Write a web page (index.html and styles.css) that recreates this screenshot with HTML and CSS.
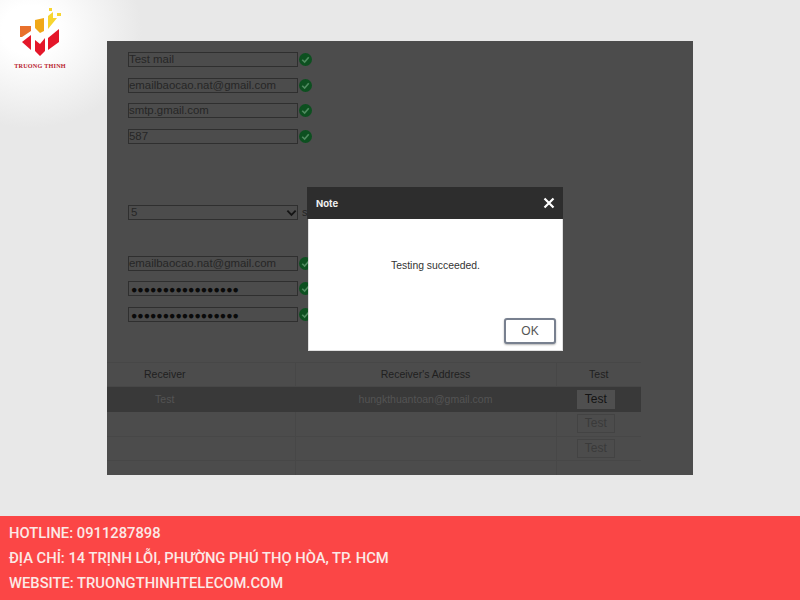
FILE: index.html
```html
<!DOCTYPE html>
<html lang="en">
<head>
  <meta charset="UTF-8">
  <meta name="viewport" content="width=device-width, initial-scale=1.0">
  <title>Testing succeeded</title>
  <link rel="stylesheet" href="styles.css">
</head>
<body>
  <div class="stage">
    <div class="logo">
      <svg width="42" height="50" viewBox="0 0 42 50">
        <polygon points="1,18 12,18 12,23 3,29 1,29" fill="#e8702c"/>
        <polygon points="16,12 25,10 25,23 21,25 16,20" fill="#f0a818"/>
        <polygon points="29,8 34,4 34,10 38,10 29,21" fill="#f7d530"/>
        <rect x="30" y="0" width="3" height="3" fill="#f7d530"/>
        <rect x="38" y="5" width="4" height="3" fill="#f7d530"/>
        <polygon points="3,34 12,27 12,42" fill="#e4172a"/>
        <polygon points="16,32 21,36 26,30 26,43 21,48 16,43" fill="#e4172a"/>
        <polygon points="29,30 40,21 40,34 29,42" fill="#e4172a"/>
      </svg>
      <span class="logo-name">TRUONG THINH</span>
    </div>

    <div class="panel">
      <div class="fields">
        <div class="field"><div class="input">Test mail</div><span class="check"><svg viewBox="0 0 12 12"><path d="M3 6.2 5.2 8.4 9 4"/></svg></span></div>
        <div class="field"><div class="input">emailbaocao.nat@gmail.com</div><span class="check"><svg viewBox="0 0 12 12"><path d="M3 6.2 5.2 8.4 9 4"/></svg></span></div>
        <div class="field"><div class="input">smtp.gmail.com</div><span class="check"><svg viewBox="0 0 12 12"><path d="M3 6.2 5.2 8.4 9 4"/></svg></span></div>
        <div class="field"><div class="input">587</div><span class="check"><svg viewBox="0 0 12 12"><path d="M3 6.2 5.2 8.4 9 4"/></svg></span></div>
      </div>

      <div class="field select-row">
        <div class="input select">5
          <svg class="chevron" viewBox="0 0 12 8"><path d="M1.5 1.5 6 6 10.5 1.5"/></svg>
        </div>
        <span class="unit">s</span>
      </div>

      <div class="fields">
        <div class="field"><div class="input">emailbaocao.nat@gmail.com</div><span class="check"><svg viewBox="0 0 12 12"><path d="M3 6.2 5.2 8.4 9 4"/></svg></span></div>
        <div class="field"><div class="input dots">●●●●●●●●●●●●●●●●●</div><span class="check"><svg viewBox="0 0 12 12"><path d="M3 6.2 5.2 8.4 9 4"/></svg></span></div>
        <div class="field"><div class="input dots">●●●●●●●●●●●●●●●●●</div><span class="check"><svg viewBox="0 0 12 12"><path d="M3 6.2 5.2 8.4 9 4"/></svg></span></div>
      </div>

      <table class="receivers">
        <colgroup>
          <col class="col-name">
          <col class="col-addr">
          <col class="col-test">
        </colgroup>
        <thead>
          <tr><th class="cell-name">Receiver</th><th>Receiver's Address</th><th>Test</th></tr>
        </thead>
        <tbody>
          <tr class="selected"><td class="cell-name">Test</td><td>hungkthuantoan@gmail.com</td><td class="cell-btn"><span class="test-btn active">Test</span></td></tr>
          <tr><td></td><td></td><td class="cell-btn"><span class="test-btn">Test</span></td></tr>
          <tr><td></td><td></td><td class="cell-btn"><span class="test-btn">Test</span></td></tr>
          <tr class="cut"><td></td><td></td><td></td></tr>
        </tbody>
      </table>

      <div class="dialog">
        <div class="dialog-head">
          <span class="dialog-title">Note</span>
          <svg class="dialog-close" viewBox="0 0 12 12"><path d="M1.5 1.5 10.5 10.5M10.5 1.5 1.5 10.5"/></svg>
        </div>
        <div class="dialog-body">
          <p class="dialog-msg">Testing succeeded.</p>
          <button class="ok-btn" type="button">OK</button>
        </div>
      </div>
    </div>
  </div>

  <footer class="contact">
    <div>HOTLINE: 0911287898</div>
    <div>ĐỊA CHỈ: 14 TRỊNH LỖI, PHƯỜNG PHÚ THỌ HÒA, TP. HCM</div>
    <div>WEBSITE: TRUONGTHINHTELECOM.COM</div>
  </footer>
</body>
</html>
```

FILE: styles.css
```css
html, body {
  margin: 0;
  padding: 0;
  height: 600px;
  overflow: hidden;
}
body {
  font-family: 'Liberation Sans', Arial, sans-serif;
  display: flex;
  flex-direction: column;
}
.stage {
  position: relative;
  height: 516px;
  box-sizing: border-box;
  padding: 41px 107px;
  background: radial-gradient(ellipse 112px 98px at 30px 30px, #ffffff 25%, #e8e8e8 100%);
}
.logo {
  position: absolute;
  left: 14px;
  top: 8px;
  width: 52px;
  display: flex;
  flex-direction: column;
  align-items: center;
}
.logo svg {
  display: block;
}
.logo-name {
  font-family: 'Liberation Serif', serif;
  font-weight: bold;
  font-size: 6.2px;
  letter-spacing: 0.2px;
  color: #b8202c;
  white-space: nowrap;
  margin-top: 4px;
}

.panel {
  position: relative;
  height: 434px;
  background-color: #4c4c4c;
  overflow: hidden;
}
.fields {
  display: flex;
  flex-direction: column;
  gap: 10.5px;
  padding-left: 21px;
}
.fields:first-child {
  padding-top: 11px;
}
.field {
  display: flex;
  align-items: center;
  gap: 1px;
}
.input {
  width: 170px;
  height: 15px;
  box-sizing: border-box;
  border: 1px solid #2f2f2f;
  padding-left: 0;
  font-size: 11.4px;
  line-height: 13px;
  color: #262626;
  white-space: nowrap;
  overflow: hidden;
}
.check {
  width: 13px;
  height: 13px;
  border-radius: 50%;
  background-color: #0d5020;
  flex: none;
}
.check svg {
  display: block;
  width: 13px;
  height: 13px;
  fill: none;
  stroke: #4f8a5f;
  stroke-width: 1.5;
}
.dots {
  font-size: 10.5px;
  color: #0a0a0a;
  line-height: 14px;
  padding-left: 2px;
}
.select-row {
  padding-left: 21px;
  margin-top: 61px;
  margin-bottom: 36px;
}
.select {
  position: relative;
  color: #262626;
  padding-left: 2px;
}
.chevron {
  position: absolute;
  right: 0;
  top: 3px;
  width: 11px;
  height: 8px;
  fill: none;
  stroke: #141414;
  stroke-width: 2;
}
.unit {
  font-size: 11px;
  color: #232323;
  margin-left: 3px;
}

.receivers {
  width: 534px;
  margin-top: 40px;
  border-collapse: collapse;
  table-layout: fixed;
  font-size: 10.5px;
  color: #202020;
}
.receivers th, .receivers td {
  height: 23.7px;
  padding: 0;
  text-align: center;
  font-weight: normal;
  border: 1px solid #474747;
  border-left: none;
}
.receivers th:last-child, .receivers td:last-child {
  border-right: none;
}
.col-name { width: 188px; }
.col-addr { width: 261px; }
.col-test { width: 85px; }
.receivers .cell-name {
  padding-right: 72px;
}
.receivers .cell-btn {
  padding-right: 6px;
}
.selected td {
  background-color: #393939;
  color: #545454;
  border-color: #393939;
}
.cut td {
  height: 16px;
}
.test-btn {
  display: inline-block;
  width: 38px;
  height: 19px;
  box-sizing: border-box;
  border: 1px solid #434343;
  font-size: 12px;
  line-height: 17px;
  color: #3a3a3a;
  vertical-align: middle;
}
.test-btn.active {
  background-color: #4f4f4f;
  border-color: #4f4f4f;
  color: #141414;
}

.dialog {
  position: absolute;
  left: 200px;
  top: 146px;
  width: 256px;
  height: 164px;
  display: flex;
  flex-direction: column;
}
.dialog-head {
  height: 32px;
  flex: none;
  background-color: #2d2d2d;
  display: flex;
  align-items: center;
  justify-content: space-between;
  padding: 0 8px 0 9px;
}
.dialog-title {
  font-family: 'Inter', 'Liberation Sans', sans-serif;
  font-weight: bold;
  font-size: 9.5px;
  color: #f0f0f0;
}
.dialog-close {
  width: 12px;
  height: 12px;
  fill: none;
  stroke: #ffffff;
  stroke-width: 2.2;
}
.dialog-body {
  flex: 1;
  background-color: #ffffff;
  border: 1px solid #e0e0e0;
  border-top: none;
  margin-left: 1px;
  display: flex;
  flex-direction: column;
  align-items: center;
}
.dialog-msg {
  margin: 41px 0 0;
  font-size: 10.4px;
  color: #333333;
}
.ok-btn {
  align-self: flex-end;
  margin: auto 6px 6px 0;
  width: 52px;
  height: 26px;
  background-color: #ffffff;
  border: 2px solid #78808f;
  border-radius: 3px;
  box-shadow: 0 1px 2px rgba(0, 0, 0, 0.3);
  font-family: 'Liberation Sans', Arial, sans-serif;
  font-size: 12px;
  color: #555555;
  padding: 0;
}

.contact {
  flex: 1;
  background-color: #fb4646;
  color: #fbe9e6;
  font-family: 'Roboto', sans-serif;
  font-weight: 500;
  font-size: 14.75px;
  line-height: 25px;
  padding: 5px 0 0 9px;
}
```
